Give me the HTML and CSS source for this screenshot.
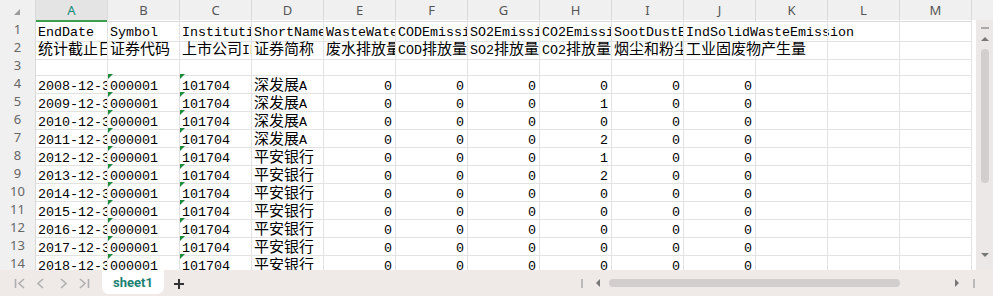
FILE: index.html
```html
<!DOCTYPE html>
<html lang="zh-CN">
<head>
    <meta charset="UTF-8">
    <meta name="viewport" content="width=device-width, initial-scale=1.0">
    <title>sheet1</title>
    <link rel="stylesheet" href="styles.css">
</head>
<body>
    <div class="sheet">
        <div class="main">
            <div class="grid">
                <div class="row head">
                    <div class="corner"><svg width="8" height="8" viewBox="0 0 8 8"><polygon points="7,1 7,7 1,7" fill="#9c9c9c"/></svg></div>
                    <div class="ch active">A</div><div class="ch">B</div><div class="ch">C</div><div class="ch">D</div><div class="ch">E</div><div class="ch">F</div><div class="ch">G</div><div class="ch">H</div><div class="ch">I</div><div class="ch">J</div><div class="ch">K</div><div class="ch">L</div><div class="ch">M</div>
                </div>
                <div class="row">
                    <div class="rh">1</div>
                    <div class="c">EndDate</div><div class="c">Symbol</div><div class="c">InstitutionID</div><div class="c">ShortName</div><div class="c">WasteWaterEmission</div><div class="c">CODEmission</div><div class="c">SO2Emission</div><div class="c">CO2Emission</div><div class="c">SootDustEmission</div><div class="c spill">IndSolidWasteEmission</div><div class="c"></div><div class="c"></div><div class="c"></div>
                </div>
                <div class="row">
                    <div class="rh">2</div>
                    <div class="c"><span class="zh">统计截止日期</span></div><div class="c"><span class="zh">证券代码</span></div><div class="c"><span class="zh">上市公司</span>ID</div><div class="c"><span class="zh">证券简称</span></div><div class="c"><span class="zh">废水排放量</span></div><div class="c">COD<span class="zh">排放量</span></div><div class="c">SO2<span class="zh">排放量</span></div><div class="c">CO2<span class="zh">排放量</span></div><div class="c"><span class="zh">烟尘和粉尘排放量</span></div><div class="c spill"><span class="zh">工业固废物产生量</span></div><div class="c"></div><div class="c"></div><div class="c"></div>
                </div>
                <div class="row">
                    <div class="rh">3</div>
                    <div class="c"></div><div class="c"></div><div class="c"></div><div class="c"></div><div class="c"></div><div class="c"></div><div class="c"></div><div class="c"></div><div class="c"></div><div class="c"></div><div class="c"></div><div class="c"></div><div class="c"></div>
                </div>
                <div class="row">
                    <div class="rh">4</div>
                    <div class="c">2008-12-31</div><div class="c t">000001</div><div class="c t">101704</div><div class="c"><span class="zh">深发展</span>A</div><div class="c n">0</div><div class="c n">0</div><div class="c n">0</div><div class="c n">0</div><div class="c n">0</div><div class="c n">0</div><div class="c"></div><div class="c"></div><div class="c"></div>
                </div>
                <div class="row">
                    <div class="rh">5</div>
                    <div class="c">2009-12-31</div><div class="c t">000001</div><div class="c t">101704</div><div class="c"><span class="zh">深发展</span>A</div><div class="c n">0</div><div class="c n">0</div><div class="c n">0</div><div class="c n">1</div><div class="c n">0</div><div class="c n">0</div><div class="c"></div><div class="c"></div><div class="c"></div>
                </div>
                <div class="row">
                    <div class="rh">6</div>
                    <div class="c">2010-12-31</div><div class="c t">000001</div><div class="c t">101704</div><div class="c"><span class="zh">深发展</span>A</div><div class="c n">0</div><div class="c n">0</div><div class="c n">0</div><div class="c n">0</div><div class="c n">0</div><div class="c n">0</div><div class="c"></div><div class="c"></div><div class="c"></div>
                </div>
                <div class="row">
                    <div class="rh">7</div>
                    <div class="c">2011-12-31</div><div class="c t">000001</div><div class="c t">101704</div><div class="c"><span class="zh">深发展</span>A</div><div class="c n">0</div><div class="c n">0</div><div class="c n">0</div><div class="c n">2</div><div class="c n">0</div><div class="c n">0</div><div class="c"></div><div class="c"></div><div class="c"></div>
                </div>
                <div class="row">
                    <div class="rh">8</div>
                    <div class="c">2012-12-31</div><div class="c t">000001</div><div class="c t">101704</div><div class="c"><span class="zh">平安银行</span></div><div class="c n">0</div><div class="c n">0</div><div class="c n">0</div><div class="c n">1</div><div class="c n">0</div><div class="c n">0</div><div class="c"></div><div class="c"></div><div class="c"></div>
                </div>
                <div class="row">
                    <div class="rh">9</div>
                    <div class="c">2013-12-31</div><div class="c t">000001</div><div class="c t">101704</div><div class="c"><span class="zh">平安银行</span></div><div class="c n">0</div><div class="c n">0</div><div class="c n">0</div><div class="c n">2</div><div class="c n">0</div><div class="c n">0</div><div class="c"></div><div class="c"></div><div class="c"></div>
                </div>
                <div class="row">
                    <div class="rh">10</div>
                    <div class="c">2014-12-31</div><div class="c t">000001</div><div class="c t">101704</div><div class="c"><span class="zh">平安银行</span></div><div class="c n">0</div><div class="c n">0</div><div class="c n">0</div><div class="c n">0</div><div class="c n">0</div><div class="c n">0</div><div class="c"></div><div class="c"></div><div class="c"></div>
                </div>
                <div class="row">
                    <div class="rh">11</div>
                    <div class="c">2015-12-31</div><div class="c t">000001</div><div class="c t">101704</div><div class="c"><span class="zh">平安银行</span></div><div class="c n">0</div><div class="c n">0</div><div class="c n">0</div><div class="c n">0</div><div class="c n">0</div><div class="c n">0</div><div class="c"></div><div class="c"></div><div class="c"></div>
                </div>
                <div class="row">
                    <div class="rh">12</div>
                    <div class="c">2016-12-31</div><div class="c t">000001</div><div class="c t">101704</div><div class="c"><span class="zh">平安银行</span></div><div class="c n">0</div><div class="c n">0</div><div class="c n">0</div><div class="c n">0</div><div class="c n">0</div><div class="c n">0</div><div class="c"></div><div class="c"></div><div class="c"></div>
                </div>
                <div class="row">
                    <div class="rh">13</div>
                    <div class="c">2017-12-31</div><div class="c t">000001</div><div class="c t">101704</div><div class="c"><span class="zh">平安银行</span></div><div class="c n">0</div><div class="c n">0</div><div class="c n">0</div><div class="c n">0</div><div class="c n">0</div><div class="c n">0</div><div class="c"></div><div class="c"></div><div class="c"></div>
                </div>
                <div class="row">
                    <div class="rh">14</div>
                    <div class="c">2018-12-31</div><div class="c t">000001</div><div class="c t">101704</div><div class="c"><span class="zh">平安银行</span></div><div class="c n">0</div><div class="c n">0</div><div class="c n">0</div><div class="c n">0</div><div class="c n">0</div><div class="c n">0</div><div class="c"></div><div class="c"></div><div class="c"></div>
                </div>
            </div>
            <div class="vscroll">
                <div class="vcap"></div>
                <div class="vtrack">
                    <div class="vdash"></div>
                    <div class="arrow up"></div>
                    <div class="vthumb"></div>
                    <div class="arrow down"></div>
                </div>
            </div>
        </div>
        <div class="tabbar">
            <svg class="nav" width="96" height="26" viewBox="0 0 96 26">
                <g fill="none" stroke="#b0b0b0" stroke-width="1.6">
                    <path d="M15.5 9v9"/>
                    <path d="M24 9l-5 4.5 5 4.5"/>
                    <path d="M43 9l-5 4.5 5 4.5"/>
                    <path d="M61 9l5 4.5-5 4.5"/>
                    <path d="M80 9l5 4.5-5 4.5"/>
                    <path d="M88.5 9v9"/>
                </g>
            </svg>
            <div class="tab">sheet1</div>
            <svg class="add" width="12" height="12" viewBox="0 0 12 12">
                <path d="M6 1v10M1 6h10" stroke="#333" stroke-width="2"/>
            </svg>
            <div class="hscroll">
                <div class="hbar"></div>
                <div class="arrow left"></div>
                <div class="hthumb"></div>
                <div class="arrow right"></div>
                <div class="hbar end"></div>
            </div>
        </div>
    </div>
</body>
</html>
```

FILE: styles.css
```css
* {
    box-sizing: border-box;
}
body {
    margin: 0;
    background-color: white;
    font-family: "Liberation Mono", "Noto Sans CJK SC", monospace;
    font-size: 13.33px;
    color: #000;
}
.sheet {
    width: 993px;
    height: 296px;
    display: flex;
    flex-direction: column;
    overflow: hidden;
}
.main {
    display: flex;
    height: 270px;
    overflow: hidden;
}
.grid {
    width: 976px;
    flex-shrink: 0;
}
.row {
    display: grid;
    grid-template-columns: 36px repeat(13, 72px);
    height: 18px;
}
.row.head {
    height: 20px;
    background-color: #f0f0f0;
}
.corner {
    display: flex;
    align-items: flex-start;
    justify-content: flex-end;
    padding: 8px 14px 0 0;
    border-right: 1px solid #dadada;
    border-bottom: 1px solid #dadada;
}
.ch {
    font-family: "Noto Sans", sans-serif;
    font-size: 13px;
    color: #555;
    text-align: center;
    line-height: 20px;
    border-right: 1px solid #dadada;
    border-bottom: 1px solid #dadada;
}
.ch.active {
    background-color: #e4e4e4;
    color: #158a78;
    border-bottom: 2px solid #3c9e4e;
}
.rh {
    font-family: "Noto Sans", sans-serif;
    font-size: 13px;
    color: #666;
    text-align: center;
    line-height: 19px;
    background-color: #f0f0f0;
    border-right: 1px solid #dadada;
    border-bottom: 1px solid #dadada;
}
.c {
    position: relative;
    padding: 4px 2px 0 2px;
    line-height: 17px;
    white-space: nowrap;
    overflow: hidden;
    border-right: 1px solid #e2e2e2;
    border-bottom: 1px solid #e2e2e2;
}
.c.n {
    text-align: right;
    padding-right: 3px;
}
.c.spill {
    overflow: visible;
    border-right-color: transparent;
}
.c.t::before {
    content: "";
    position: absolute;
    top: 0;
    left: 0;
    border-top: 5px solid #1e8a3c;
    border-right: 5px solid transparent;
}
.zh {
    font-family: "Noto Sans CJK SC", sans-serif;
    font-size: 15px;
    line-height: 10px;
}
.vscroll {
    width: 17px;
    display: flex;
    flex-direction: column;
}
.vcap {
    height: 20px;
    background-color: #f0f0f0;
}
.vtrack {
    flex: 1;
    background-color: #ece8e7;
    display: flex;
    flex-direction: column;
    align-items: center;
}
.vdash {
    width: 8px;
    height: 2px;
    margin-top: 7px;
    background-color: #aaa;
}
.vthumb {
    width: 8px;
    height: 134px;
    margin-top: 8px;
    border-radius: 4px;
    background-color: #d2cecd;
}
.arrow {
    width: 0;
    height: 0;
    border: 4px solid transparent;
}
.arrow.up {
    margin-top: 8px;
    border-top-width: 0;
    border-bottom: 4px solid #777;
}
.arrow.down {
    margin-top: 70px;
    border-bottom-width: 0;
    border-top: 4px solid #777;
}
.tabbar {
    height: 26px;
    display: flex;
    align-items: flex-start;
    background-color: #efe9e7;
}
.nav {
    flex-shrink: 0;
}
.tab {
    margin-left: 6px;
    width: 62px;
    height: 24px;
    background-color: white;
    border-radius: 0 0 7px 7px;
    font-family: Roboto, sans-serif;
    font-weight: bold;
    font-size: 13px;
    color: #1b7f72;
    text-align: center;
    line-height: 25px;
}
.add {
    margin: 8px 0 0 9px;
}
.hscroll {
    margin-left: auto;
    width: 417px;
    height: 26px;
    display: flex;
    align-items: center;
}
.hbar {
    width: 2px;
    height: 9px;
    margin-left: 5px;
    background-color: #bbb;
}
.hbar.end {
    margin-left: 14px;
}
.arrow.left {
    margin-left: 13px;
    border-left-width: 0;
    border-right: 4px solid #777;
}
.arrow.right {
    margin-left: 55px;
    border-right-width: 0;
    border-left: 4px solid #777;
}
.hthumb {
    width: 291px;
    height: 8px;
    margin-left: 9px;
    border-radius: 4px;
    background-color: #d2cecd;
}
```
